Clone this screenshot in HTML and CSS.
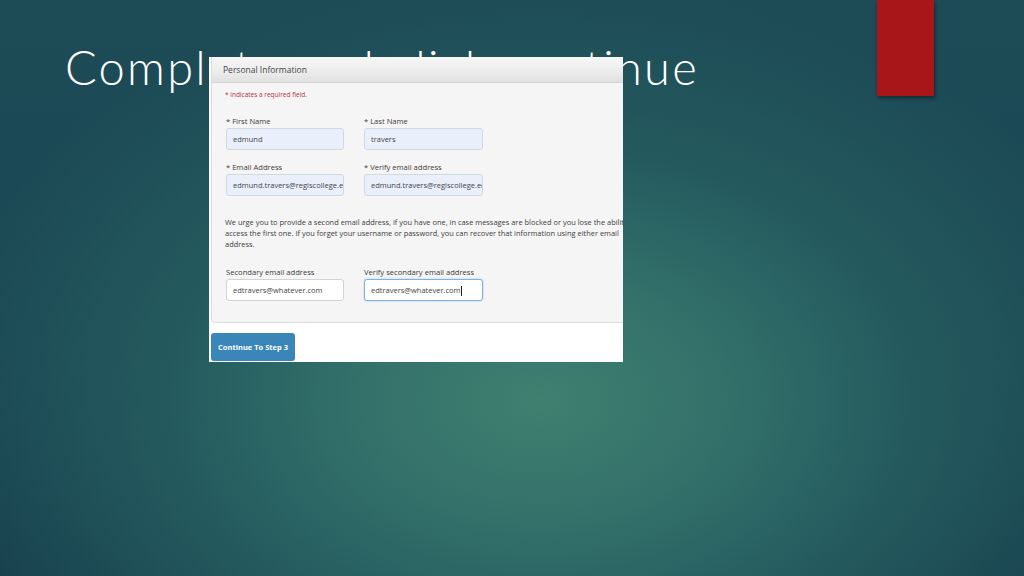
FILE: index.html
```html
<!DOCTYPE html>
<html lang="en">
<head>
<meta charset="utf-8">
<title>Complete and click continue</title>
<link rel="stylesheet" href="styles.css">
</head>
<body>
<div class="slide">
  <h1 class="title">Complete and click continue</h1>
  <div class="accent"></div>
  <div class="shot">
    <div class="panel">
      <div class="panel-head">Personal Information</div>
      <div class="panel-body">
        <p class="req">* indicates a required field.</p>
        <div class="row">
          <div class="field">
            <label class="lbl">* First Name</label>
            <div class="inp fill">edmund</div>
          </div>
          <div class="field">
            <label class="lbl">* Last Name</label>
            <div class="inp fill">travers</div>
          </div>
        </div>
        <div class="row">
          <div class="field">
            <label class="lbl">* Email Address</label>
            <div class="inp fill">edmund.travers@regiscollege.edu</div>
          </div>
          <div class="field">
            <label class="lbl">* Verify email address</label>
            <div class="inp fill">edmund.travers@regiscollege.edu</div>
          </div>
        </div>
        <p class="note">We urge you to provide a second email address, if you have one, in case messages are blocked or you lose the ability to access the first one. If you forget your username or password, you can recover that information using either email address.</p>
        <div class="row">
          <div class="field">
            <label class="lbl">Secondary email address</label>
            <div class="inp">edtravers@whatever.com</div>
          </div>
          <div class="field">
            <label class="lbl">Verify secondary email address</label>
            <div class="inp focus">edtravers@whatever.com<span class="caret"></span></div>
          </div>
        </div>
      </div>
    </div>
    <button class="btn">Continue To Step 3</button>
  </div>
</div>
</body>
</html>
```
FILE: styles.css
```css
html, body {
  margin: 0;
  padding: 0;
}
body {
  width: 1024px;
  height: 576px;
  overflow: hidden;
  font-family: "Open Sans", "Liberation Sans", sans-serif;
}
.slide {
  position: relative;
  width: 1024px;
  height: 576px;
  background:
    radial-gradient(ellipse 620px 420px at 540px 400px, #3f8070 0%, #33706a 30%, #245a5e 60%, rgba(27,74,85,0) 100%),
    linear-gradient(180deg, #1d4b56 0%, #1a4754 60%, #173f4d 100%);
  overflow: hidden;
}
.title {
  margin: 0;
  padding: 44px 0 0 65px;
  font-family: "Lato", "Open Sans", sans-serif;
  font-weight: 300;
  font-size: 47px;
  line-height: 47px;
  color: #ffffff;
  letter-spacing: 2.25px;
  white-space: nowrap;
}
.accent {
  position: absolute;
  left: 877px;
  top: 0;
  width: 57px;
  height: 96px;
  background: #a8161a;
  box-shadow: 1px 2px 4px rgba(0,0,0,0.45);
}
.shot {
  position: absolute;
  left: 209px;
  top: 57px;
  width: 414px;
  height: 305px;
  background: #ffffff;
  overflow: hidden;
}
.panel {
  margin-left: 2px;
  width: 460px;
  border: 1px solid #dcdcdc;
  border-top: none;
  border-radius: 0 0 4px 4px;
  background: #f6f5f5;
}
.panel-head {
  height: 25px;
  line-height: 26px;
  padding-left: 11px;
  font-size: 8.5px;
  color: #454545;
  background: linear-gradient(180deg, #f7f7f7 0%, #ececec 60%, #e0e0e0 100%);
  border-bottom: 1px solid #d6d6d6;
}
.panel-body {
  padding: 7px 0 21px 13px;
}
.req {
  margin: 0 0 15px;
  font-size: 6.5px;
  line-height: 10px;
  color: #b0343f;
}
.row {
  display: grid;
  grid-template-columns: 118px 119px;
  column-gap: 20px;
  margin-left: 1px;
  margin-bottom: 11px;
}
.field {
  display: flex;
  flex-direction: column;
  gap: 1px;
}
.lbl {
  font-size: 7.6px;
  line-height: 12px;
  color: #3a3a3a;
  white-space: nowrap;
}
.inp {
  height: 20px;
  line-height: 20px;
  padding: 0 6px;
  border: 1px solid #d3d3d3;
  border-radius: 3px;
  background: #ffffff;
  font-size: 7.5px;
  color: #444;
  white-space: nowrap;
  overflow: hidden;
}
.inp.fill {
  background: #e9f0fc;
  border-color: #d2d8e2;
}
.inp.focus {
  border-color: #7fb2e0;
  box-shadow: 0 0 2px rgba(102,175,233,0.6);
}
.caret {
  display: inline-block;
  width: 1px;
  height: 10px;
  background: #222;
  vertical-align: middle;
}
.note {
  margin: 21px 0 16px;
  width: 418px;
  font-size: 7.45px;
  line-height: 11px;
  color: #3c3c3c;
}
.row:last-child {
  margin-bottom: 0;
}
.btn {
  display: block;
  margin: 10px 0 0 2px;
  width: 84px;
  height: 28px;
  padding: 0;
  border: none;
  border-radius: 3px;
  background: #3a86b9;
  color: #ffffff;
  font-family: "Open Sans", "Liberation Sans", sans-serif;
  font-weight: 700;
  font-size: 7.5px;
}
```
